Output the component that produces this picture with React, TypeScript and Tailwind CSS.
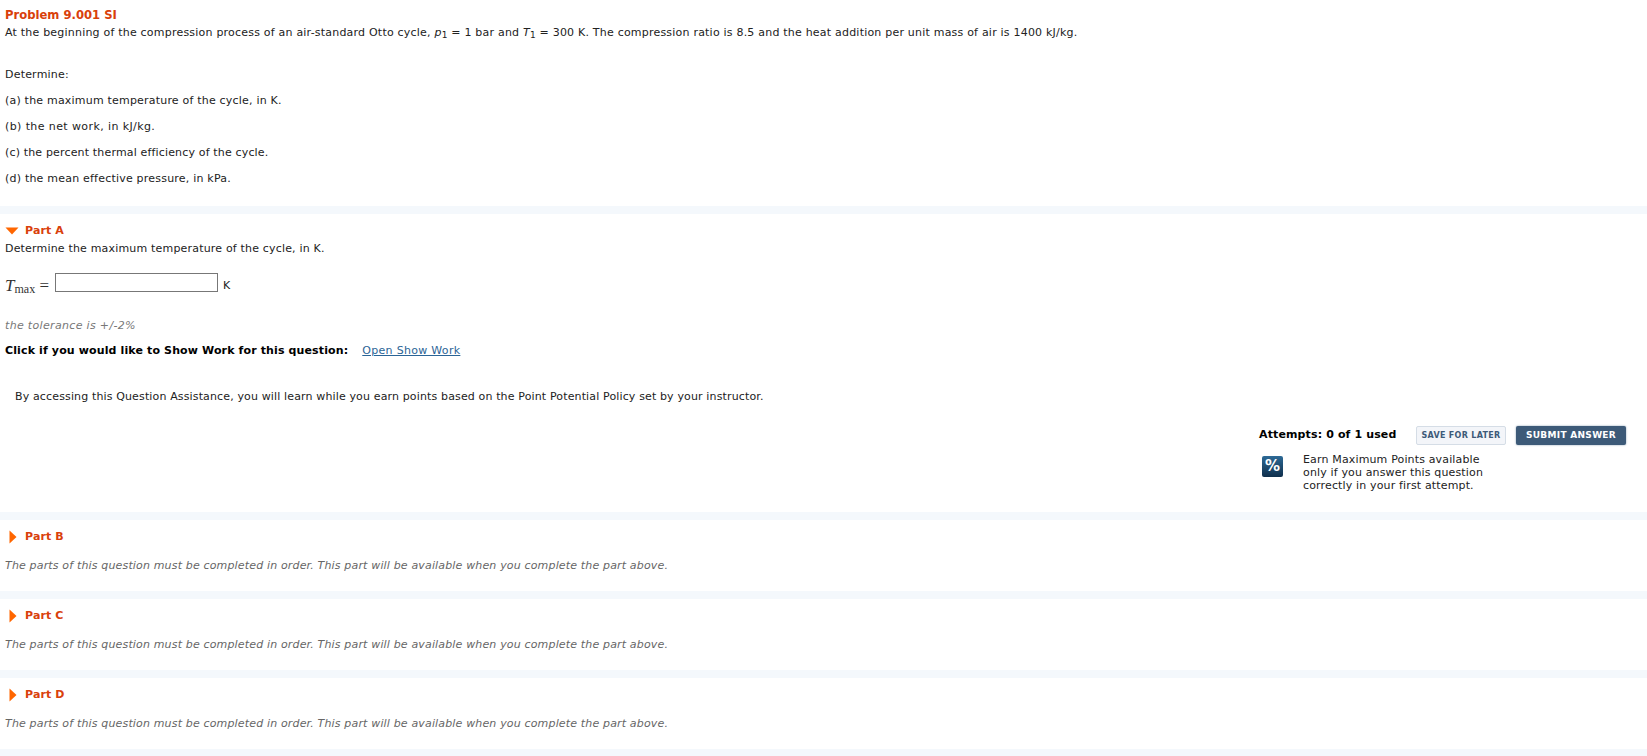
import React from 'react';

const FONT = "font-['DejaVu_Sans',Verdana,sans-serif]";

const Band = () => <div className="h-2 bg-[#f4f8fc]" />;

const LockedPart = ({ name }: { name: string }) => (
  <section className="h-[71px] pl-[5px] pt-[9px]">
    <div className="flex h-[16px] items-center pl-[4px]">
      <svg width="8" height="14" viewBox="0 0 8 14" className="mr-[8px]">
        <path d="M0.5 0.5 L7.5 7 L0.5 13.5 Z" fill="#ff6600" />
      </svg>
      <span className="font-bold tracking-[0.13px] text-[#d9400b]">{name}</span>
    </div>
    <p className="mt-[13px] leading-[16px] italic tracking-[0.16px] text-[#666]">
      The parts of this question must be completed in order. This part will be available when you complete the part above.
    </p>
  </section>
);

export default function App() {
  return (
    <div className={`${FONT} h-[756px] w-full overflow-hidden bg-white text-[11px] text-[#222]`}>
      {/* Problem statement */}
      <section className="h-[206px] pl-[5px] pt-[7px]">
        <h1 className="text-[11.6px] font-bold leading-[16px] text-[#d9400b]">Problem 9.001 SI</h1>
        <p className="mt-[2px] h-[16px] leading-[16px] tracking-[0.21px]">
          At the beginning of the compression process of an air-standard Otto cycle, <i>p</i><sub className="text-[9px]">1</sub> = 1 bar and <i>T</i><sub className="text-[9px]">1</sub> = 300 K. The compression ratio is 8.5 and the heat addition per unit mass of air is 1400 kJ/kg.
        </p>
        <p className="mt-[26px] leading-[16px] tracking-[0.2px]">Determine:</p>
        <p className="mt-[10px] leading-[16px] tracking-[0.2px]">(a) the maximum temperature of the cycle, in K.</p>
        <p className="mt-[10px] leading-[16px] tracking-[0.4px]">(b) the net work, in kJ/kg.</p>
        <p className="mt-[10px] leading-[16px] tracking-[0.16px]">(c) the percent thermal efficiency of the cycle.</p>
        <p className="mt-[10px] leading-[16px] tracking-[0.21px]">(d) the mean effective pressure, in kPa.</p>
      </section>
      <Band />

      {/* Part A */}
      <section className="h-[298px] pl-[5px] pr-[21px] pt-[9px]">
        <div className="flex h-[16px] items-center">
          <svg width="14" height="8" viewBox="0 0 14 8" className="mr-[6px]">
            <path d="M0.5 0.5 L13.5 0.5 L7 7.5 Z" fill="#ff6600" />
          </svg>
          <span className="font-bold tracking-[0.13px] text-[#d9400b]">Part A</span>
        </div>
        <p className="mt-[2px] leading-[16px] tracking-[0.18px]">Determine the maximum temperature of the cycle, in K.</p>
        <div className="mt-[16px] flex h-[19px] items-start">
          <span className="w-[50px] whitespace-nowrap font-['Liberation_Serif',serif] text-[17px] leading-[26px] text-[#333]">
            <i>T</i><span className="relative top-[2px] text-[12px]">max</span> <span className="text-[17px]">=</span>
          </span>
          <input className="h-[19px] w-[163px] border border-[#777] bg-white" />
          <span className="ml-[5px] mt-[5px] leading-[16px]">K</span>
        </div>
        <p className="mt-[26px] leading-[16px] italic tracking-[0.33px] text-[#777]">the tolerance is +/-2%</p>
        <p className="mt-[9px] flex leading-[16px]">
          <b className="tracking-[0.13px] text-black">Click if you would like to Show Work for this question:</b>
          <a className="ml-[14px] tracking-[0.3px] text-[#2a6496] underline">Open Show Work</a>
        </p>
        <p className="mt-[30px] pl-[10px] leading-[16px] tracking-[0.14px]">
          By accessing this Question Assistance, you will learn while you earn points based on the Point Potential Policy set by your instructor.
        </p>
        <div className="mt-[21px] flex justify-end">
          <div className="w-[367px]">
            <div className="flex items-center">
              <b className="w-[157px] tracking-[0.13px] text-black">Attempts: 0 of 1 used</b>
              <button className="h-[19px] w-[90px] rounded-[2px] border border-[#d5dde6] bg-[#f3f5f9] text-[8px] font-bold tracking-[0.3px] text-[#3d5a78]">
                SAVE FOR LATER
              </button>
              <button className="ml-[10px] h-[19px] w-[110px] rounded-[2px] bg-[#3d5a78] text-[9px] font-bold tracking-[0.3px] text-white shadow-[0_0_2px_#7f95ab]">
                SUBMIT ANSWER
              </button>
            </div>
            <div className="mt-[8px] flex">
              <div className="mt-[3px] ml-[3px] flex h-[21px] w-[21px] items-center justify-center rounded-[2px] bg-gradient-to-b from-[#2d6a96] to-[#0f2f4c] text-[15px] font-bold text-white">
                %
              </div>
              <p className="ml-[20px] leading-[13px] tracking-[0.15px]">
                Earn Maximum Points available<br />only if you answer this question<br />correctly in your first attempt.
              </p>
            </div>
          </div>
        </div>
      </section>
      <Band />

      <LockedPart name="Part B" />
      <Band />
      <LockedPart name="Part C" />
      <Band />
      <LockedPart name="Part D" />
      <Band />
    </div>
  );
}
